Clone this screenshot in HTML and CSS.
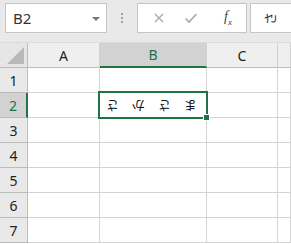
FILE: index.html
```html
<!DOCTYPE html>
<html lang="ja">
  <head>
    <meta charset="UTF-8" />
    <title>Sheet</title>
    <link rel="stylesheet" href="styles.css">
  </head>
  <body>
    <div class="bar">
      <div class="namebox">
        <span class="ref">B2</span>
        <span class="drop"></span>
      </div>
      <div class="dots"><i></i><i></i><i></i></div>
      <div class="fxbox">
        <svg class="ico" width="12" height="12" viewBox="0 0 12 12">
          <path d="M2 2 L10 10 M10 2 L2 10" stroke="#a8a8a8" stroke-width="1.3" fill="none" />
        </svg>
        <svg class="ico" width="14" height="12" viewBox="0 0 14 12">
          <path d="M1.5 6.5 L5 10 L12.5 2" stroke="#a8a8a8" stroke-width="1.6" fill="none" />
        </svg>
        <span class="fx">f<sub>x</sub></span>
      </div>
      <div class="formula"><span class="rot90">さ</span></div>
    </div>

    <div class="grid">
      <div class="corner"><span class="tri"></span></div>
      <div class="colh">A</div>
      <div class="colh sel">B</div>
      <div class="colh">C</div>
      <div class="colh"></div>

      <div class="rowh">1</div>
      <div class="cell"></div><div class="cell"></div><div class="cell"></div><div class="cell"></div>

      <div class="rowh sel">2</div>
      <div class="cell"></div>
      <div class="cell active">
        <div class="txt"><span>さ</span><span>か</span><span>さ</span><span>ま</span></div>
        <span class="handle"></span>
      </div>
      <div class="cell"></div><div class="cell"></div>

      <div class="rowh">3</div>
      <div class="cell"></div><div class="cell"></div><div class="cell"></div><div class="cell"></div>
      <div class="rowh">4</div>
      <div class="cell"></div><div class="cell"></div><div class="cell"></div><div class="cell"></div>
      <div class="rowh">5</div>
      <div class="cell"></div><div class="cell"></div><div class="cell"></div><div class="cell"></div>
      <div class="rowh">6</div>
      <div class="cell"></div><div class="cell"></div><div class="cell"></div><div class="cell"></div>
      <div class="rowh">7</div>
      <div class="cell"></div><div class="cell"></div><div class="cell"></div><div class="cell"></div>
    </div>
  </body>
</html>
```

FILE: styles.css
```css
body {
  margin: 0;
  width: 291px;
  height: 244px;
  overflow: hidden;
  background: #fff;
  font-family: "Noto Sans", "Liberation Sans", "Noto Sans CJK JP", sans-serif;
}

.bar {
  display: flex;
  align-items: flex-start;
  height: 43px;
  padding: 3px 0 0 5px;
  box-sizing: border-box;
  background: #e9e9e9;
  border-bottom: 1px solid #dcdcdc;
  overflow: hidden;
}

.bar > * {
  flex-shrink: 0;
}

.namebox {
  position: relative;
  width: 102px;
  height: 30px;
  box-sizing: border-box;
  background: #fff;
  border: 1px solid #c6c6c6;
  display: flex;
  align-items: center;
}

.ref {
  margin-left: 7px;
  font-size: 15px;
  color: #333;
}

.drop {
  position: absolute;
  right: 6px;
  top: 13px;
  border-left: 4px solid transparent;
  border-right: 4px solid transparent;
  border-top: 4px solid #777;
}

.dots {
  width: 30px;
  display: flex;
  flex-direction: column;
  align-items: center;
  gap: 2px;
  padding-top: 10px;
}

.dots i {
  width: 2px;
  height: 2px;
  background: #a0a0a0;
}

.fxbox {
  width: 110px;
  height: 30px;
  box-sizing: border-box;
  background: #fff;
  border: 1px solid #c6c6c6;
  display: flex;
  align-items: center;
  padding-left: 15px;
}

.ico {
  margin-right: 19px;
}

.ico + .ico {
  margin-right: 26px;
}

.fx {
  font-family: "Liberation Serif", serif;
  font-style: italic;
  font-size: 14px;
  color: #444;
}

.fx sub {
  font-size: 9px;
}

.formula {
  margin-left: 3px;
  width: 80px;
  height: 30px;
  box-sizing: border-box;
  background: #fff;
  border: 1px solid #c6c6c6;
  padding: 3px 0 0 12px;
}

.rot90 {
  display: inline-block;
  transform: rotate(-90deg);
  font-family: "Noto Sans CJK JP", sans-serif;
  font-size: 13px;
  color: #333;
}

.grid {
  display: grid;
  grid-template-columns: 28px 72px 107px 71px 13px;
  grid-auto-rows: 25px;
  background: #fff;
}

.grid > div {
  box-sizing: border-box;
  border-right: 1px solid #d4d4d4;
  border-bottom: 1px solid #d4d4d4;
}

.corner {
  position: relative;
  background: #e6e6e6;
  border-color: #bcbcbc !important;
}

.tri {
  position: absolute;
  right: 3px;
  bottom: 3px;
  width: 0;
  height: 0;
  border-left: 17px solid transparent;
  border-bottom: 17px solid #b9b9b9;
}

.colh,
.rowh {
  display: flex;
  align-items: center;
  justify-content: center;
  background: #e6e6e6;
  font-size: 14px;
  color: #222;
  border-color: #bcbcbc !important;
}

.colh {
  background: #efefef;
  border-right-color: #d0d0d0 !important;
}

.rowh {
  background: #e9e9e9;
}

.colh.sel {
  background: #d2d2d2;
  color: #217346;
  border-bottom: 2px solid #217346 !important;
}

.rowh.sel {
  background: #d2d2d2;
  color: #217346;
  border-right: 2px solid #217346 !important;
}

.cell.active {
  position: relative;
}

.cell.active::before {
  content: "";
  position: absolute;
  left: -2px;
  top: -2px;
  right: -2px;
  bottom: -2px;
  border: 2px solid #217346;
}

.txt {
  display: flex;
  gap: 13px;
  padding: 4px 0 0 6px;
  font-family: "Noto Sans CJK JP", sans-serif;
  font-size: 13px;
  color: #111;
}

.txt span {
  display: inline-block;
  transform: rotate(180deg);
}

.handle {
  position: absolute;
  right: -4px;
  bottom: -4px;
  width: 5px;
  height: 5px;
  background: #217346;
  border: 1px solid #fff;
}
```
